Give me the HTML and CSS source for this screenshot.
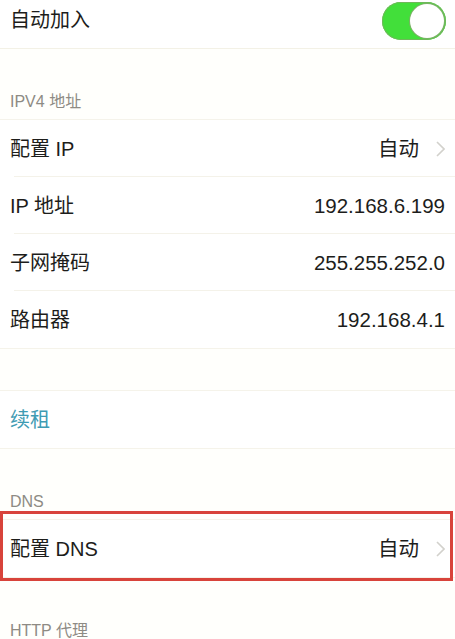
FILE: index.html
```html
<!DOCTYPE html>
<html lang="zh-CN">
<head>
<meta charset="utf-8">
<link rel="stylesheet" href="styles.css">
</head>
<body>
<div class="group group-top">
  <div class="row row-first">
    <span class="label">自动加入</span>
    <span class="toggle"><span class="knob"></span></span>
  </div>
</div>

<div class="header">IPV4 地址</div>
<div class="group">
  <div class="row sep">
    <span class="label">配置 IP</span>
    <span class="value">自动<svg class="chev" viewBox="0 0 9 16" width="9" height="16"><path d="M1 1l7 7-7 7" fill="none" stroke="#d2d1cc" stroke-width="1.6"/></svg></span>
  </div>
  <div class="row sep">
    <span class="label">IP 地址</span>
    <span class="value">192.168.6.199</span>
  </div>
  <div class="row sep">
    <span class="label">子网掩码</span>
    <span class="value">255.255.252.0</span>
  </div>
  <div class="row">
    <span class="label">路由器</span>
    <span class="value">192.168.4.1</span>
  </div>
</div>

<div class="spacer"></div>
<div class="group">
  <div class="row link-row">
    <span class="label link">续租</span>
  </div>
</div>

<div class="header">DNS</div>
<div class="group">
  <div class="row highlight">
    <span class="label">配置 DNS</span>
    <span class="value">自动<svg class="chev" viewBox="0 0 9 16" width="9" height="16"><path d="M1 1l7 7-7 7" fill="none" stroke="#d2d1cc" stroke-width="1.6"/></svg></span>
    <span class="redbox"></span>
  </div>
</div>

<div class="header">HTTP 代理</div>
</body>
</html>
```

FILE: styles.css
```css
html, body {
  margin: 0;
  padding: 0;
  background: #fffffc;
}
body {
  width: 455px;
  height: 639px;
  overflow: hidden;
  font-family: "Liberation Sans", "Noto Sans CJK SC", sans-serif;
  color: #1d1d1b;
}
.group {
  background: #ffffff;
  box-shadow: 0 1px 0 #f5f3ea, 0 -1px 0 #f5f3ea;
}
.group-top {
  box-shadow: 0 1px 0 #f3f1e6;
}
.row {
  position: relative;
  height: 57px;
  display: flex;
  align-items: center;
  justify-content: space-between;
  padding: 0 10px 0 10px;
  font-size: 20px;
}
.row.sep::after {
  content: "";
  position: absolute;
  left: 14px;
  right: 0;
  bottom: 0;
  height: 1px;
  background: #f4f2e9;
}
.row-first {
  height: 48px;
  padding-bottom: 8px;
  box-sizing: border-box;
}
.label {
  line-height: 24px;
}
.value {
  display: flex;
  align-items: center;
  gap: 17px;
  line-height: 24px;
  font-size: 20.5px;
}
.chev {
  display: block;
}
.toggle {
  position: relative;
  width: 64px;
  height: 38px;
  border-radius: 19px;
  background: #42df3a;
  box-shadow: inset 0 0 0 1px #6fb85a;
  margin-right: -1px;
  margin-top: 2px;
}
.knob {
  position: absolute;
  right: 2px;
  top: 2px;
  width: 34px;
  height: 34px;
  border-radius: 50%;
  background: #ffffff;
  box-shadow: 0 0 0 1px #7bb266;
}
.header {
  height: 72px;
  box-sizing: border-box;
  display: flex;
  align-items: flex-end;
  padding: 0 10px 9px 10px;
  font-size: 16px;
  line-height: 18px;
  color: #8e8b84;
}
.spacer {
  height: 43px;
}
.link {
  color: #3e9bb3;
}
.redbox {
  position: absolute;
  left: 0;
  right: 2px;
  top: -9px;
  bottom: -4px;
  border: 3px solid #d8433b;
  pointer-events: none;
}
```
